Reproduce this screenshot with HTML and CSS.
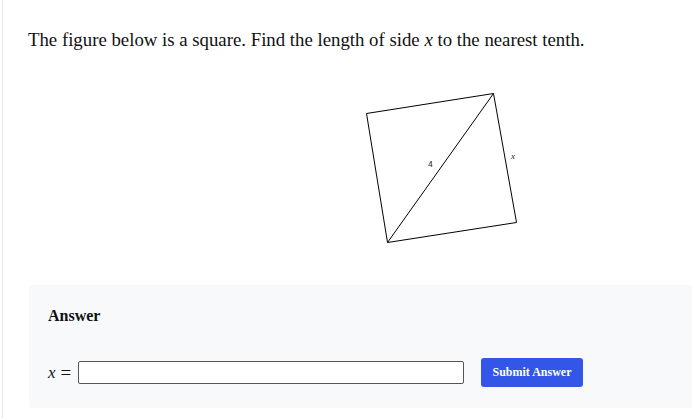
FILE: index.html
```html
<!DOCTYPE html>
<html>
<head>
<meta charset="utf-8">
<link rel="stylesheet" href="styles.css">
</head>
<body>
<div class="page">
  <p class="question">The figure below is a square. Find the length of side <span class="mathvar">x</span> to the nearest tenth.</p>
  <div class="figure">
    <svg width="170" height="160" viewBox="0 0 170 160">
      <polygon points="10.5,25.5 137.5,5.5 160.5,134.5 31.5,154.5" fill="none" stroke="#000" stroke-width="1"/>
      <line x1="31.5" y1="154.5" x2="137.5" y2="5.5" stroke="#000" stroke-width="1"/>
      <text x="72" y="79" class="lbl">4</text>
      <text x="155" y="71" class="lbl lbl-x">x</text>
    </svg>
  </div>
  <div class="answer">
    <div class="answer-title">Answer</div>
    <div class="answer-row">
      <span class="eq"><span class="mathvar">x</span><span class="equals">=</span></span>
      <input class="field" type="text">
      <button class="submit">Submit Answer</button>
    </div>
  </div>
</div>
</body>
</html>
```
FILE: styles.css
```css
html, body {
  margin: 0;
  padding: 0;
  background: #fff;
  overflow: hidden;
}
.page {
  margin-left: 2px;
  border-left: 1px solid #e6e8ec;
  padding: 29px 0 0 25px;
  width: 852px;
  min-height: 418px;
  box-sizing: border-box;
  font-family: "Liberation Serif", "DejaVu Serif", serif;
  color: #111;
}
.question {
  margin: 0;
  font-size: 18.8px;
  line-height: 22px;
}
.mathvar {
  font-style: italic;
}
.figure {
  display: flex;
  justify-content: center;
  margin-top: 37px;
}
.figure svg {
  display: block;
}
.lbl {
  font-family: "Liberation Sans", sans-serif;
  font-size: 8.5px;
  fill: #222;
}
.lbl-x {
  font-family: "Liberation Serif", serif;
  font-style: italic;
  font-size: 9px;
}
.answer {
  margin-top: 37px;
  margin-left: 1px;
  background: #f8f9fb;
  border-radius: 4px;
  padding: 22px 19px 26px;
  height: 123px;
  box-sizing: border-box;
}
.answer-title {
  font-weight: bold;
  font-size: 16px;
  line-height: 18px;
}
.answer-row {
  display: flex;
  align-items: center;
  margin-top: 33px;
}
.eq {
  display: flex;
  align-items: center;
  font-size: 17px;
  width: 30px;
}
.equals {
  margin-left: 5px;
  font-size: 19px;
}
.field {
  width: 386px;
  height: 23px;
  box-sizing: border-box;
  border: 1px solid #555;
  border-radius: 2px;
  background: #fff;
  margin: 0;
  padding: 0 4px;
}
.submit {
  margin-left: 17px;
  height: 29px;
  width: 102px;
  background: #3355e8;
  color: #fff;
  border: none;
  border-radius: 3px;
  font-family: "Liberation Serif", serif;
  font-weight: bold;
  font-size: 12px;
  padding: 0;
}
```
